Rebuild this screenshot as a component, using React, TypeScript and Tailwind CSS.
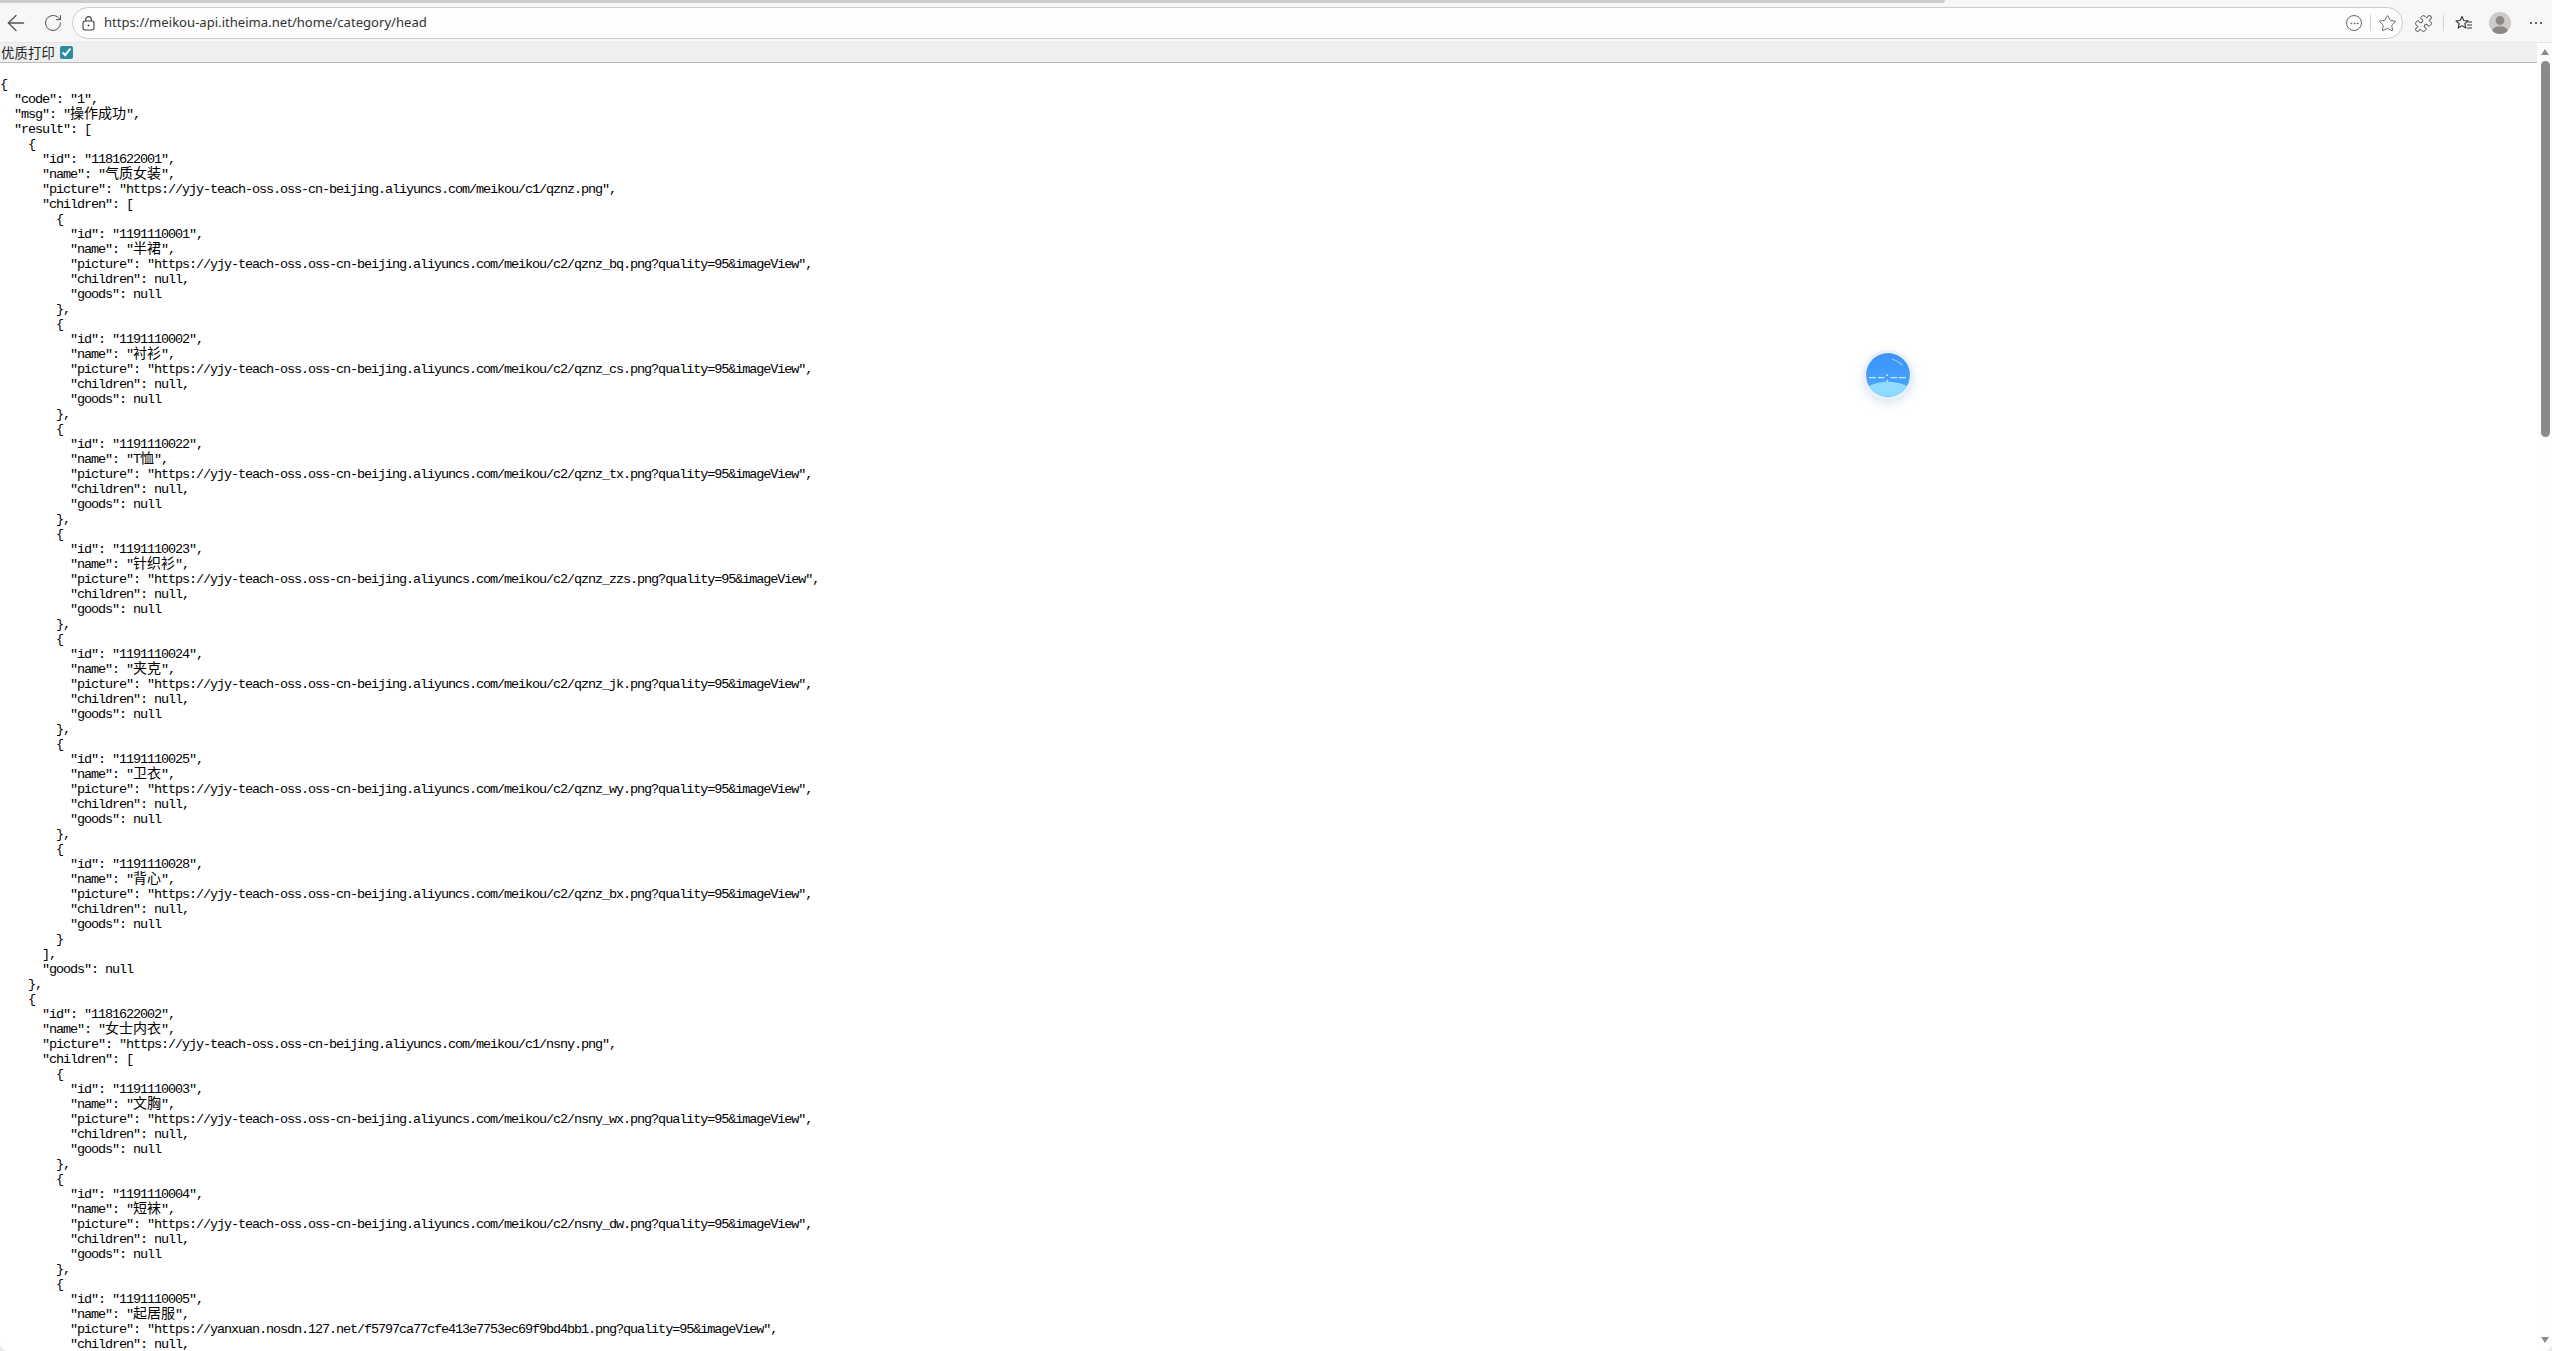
import { ArrowLeft, RotateCw, Star, Puzzle, Ellipsis } from "lucide-react";

const kids1 = [
  ["1191110001", "半裙", "https://yjy-teach-oss.oss-cn-beijing.aliyuncs.com/meikou/c2/qznz_bq.png?quality=95&imageView"],
  ["1191110002", "衬衫", "https://yjy-teach-oss.oss-cn-beijing.aliyuncs.com/meikou/c2/qznz_cs.png?quality=95&imageView"],
  ["1191110022", "T恤", "https://yjy-teach-oss.oss-cn-beijing.aliyuncs.com/meikou/c2/qznz_tx.png?quality=95&imageView"],
  ["1191110023", "针织衫", "https://yjy-teach-oss.oss-cn-beijing.aliyuncs.com/meikou/c2/qznz_zzs.png?quality=95&imageView"],
  ["1191110024", "夹克", "https://yjy-teach-oss.oss-cn-beijing.aliyuncs.com/meikou/c2/qznz_jk.png?quality=95&imageView"],
  ["1191110025", "卫衣", "https://yjy-teach-oss.oss-cn-beijing.aliyuncs.com/meikou/c2/qznz_wy.png?quality=95&imageView"],
  ["1191110028", "背心", "https://yjy-teach-oss.oss-cn-beijing.aliyuncs.com/meikou/c2/qznz_bx.png?quality=95&imageView"],
];

const kids2 = [
  ["1191110003", "文胸", "https://yjy-teach-oss.oss-cn-beijing.aliyuncs.com/meikou/c2/nsny_wx.png?quality=95&imageView"],
  ["1191110004", "短袜", "https://yjy-teach-oss.oss-cn-beijing.aliyuncs.com/meikou/c2/nsny_dw.png?quality=95&imageView"],
  ["1191110005", "起居服", "https://yanxuan.nosdn.127.net/f5797ca77cfe413e7753ec69f9bd4bb1.png?quality=95&imageView"],
];

function child(k: string[], last: boolean) {
  return [
    "        {",
    `          "id": "${k[0]}",`,
    `          "name": "${k[1]}",`,
    `          "picture": "${k[2]}",`,
    `          "children": null,`,
    `          "goods": null`,
    last ? "        }" : "        },",
  ];
}

// the screenshot stops at the "children" line of the third item
const lines = [
  "{",
  `  "code": "1",`,
  `  "msg": "操作成功",`,
  `  "result": [`,
  "    {",
  `      "id": "1181622001",`,
  `      "name": "气质女装",`,
  `      "picture": "https://yjy-teach-oss.oss-cn-beijing.aliyuncs.com/meikou/c1/qznz.png",`,
  `      "children": [`,
  ...kids1.flatMap((k, i) => child(k, i === kids1.length - 1)),
  "      ],",
  `      "goods": null`,
  "    },",
  "    {",
  `      "id": "1181622002",`,
  `      "name": "女士内衣",`,
  `      "picture": "https://yjy-teach-oss.oss-cn-beijing.aliyuncs.com/meikou/c1/nsny.png",`,
  `      "children": [`,
  ...kids2.flatMap((k) => child(k, false)),
].slice(0, 85);

function JsonLine({ text }: { text: string }) {
  const parts = text.split(/([\u4e00-\u9fff]+)/);
  return (
    <div className="h-[15px] leading-[15px] whitespace-pre">
      {parts.map((p, i) =>
        i % 2 === 1 ? (
          <span key={i} className="text-[14px] leading-[0] tracking-normal font-['Noto_Sans_CJK_SC',sans-serif]">
            {p}
          </span>
        ) : (
          <span key={i}>{p}</span>
        )
      )}
    </div>
  );
}

function Toolbar() {
  return (
    <div className="h-[43px] shrink-0 bg-[#f7f7f7] border-b border-[#e6e6e6]">
      <div className="h-[3px] w-[1945px] bg-[#cccccc] rounded-br-sm" />
      <div className="flex h-[39px] items-center pt-px pl-[3px] pr-[10px]">
        <ArrowLeft size={26} strokeWidth={1.2} className="text-[#555555]" />
        <RotateCw size={20} strokeWidth={1.2} className="ml-[14px] text-[#555555]" />
        <div className="ml-[9px] flex h-[32px] flex-1 items-center rounded-full border border-[#cccccc] bg-[#fdfdfd] pl-[9px] pr-[5px]">
          <svg width="13" height="15" viewBox="0 0 13 15" fill="none" stroke="#444" strokeWidth="1.1">
            <rect x="1" y="5" width="11" height="9" rx="2.2" />
            <path d="M3.7 5V3.4a2.8 2.8 0 0 1 5.6 0V5" />
            <circle cx="6.5" cy="9.5" r="0.9" fill="#444" stroke="none" />
          </svg>
          <span className="ml-[9px] text-[13.1px] text-[#333333] font-['Noto_Sans',sans-serif]">
            https://meikou-api.itheima.net/home/category/head
          </span>
          <div className="ml-auto flex items-center">
            <div className="flex h-[16px] w-[16px] items-center justify-center rounded-full border border-[#666666]">
              <Ellipsis size={11} strokeWidth={1.5} className="text-[#555555]" />
            </div>
            <div className="ml-[8px] mr-[7px] h-[16px] w-px bg-[#cfcfcf]" />
            <Star size={19} strokeWidth={1} className="text-[#444444]" />
          </div>
        </div>
        <Puzzle size={19} strokeWidth={1.1} className="ml-[11px] text-[#333333]" />
        <div className="ml-[10px] mr-[11px] h-[16px] w-px bg-[#d4d4d4]" />
        <svg width="18" height="17" viewBox="0 0 18 17" fill="none" stroke="#333" strokeWidth="1.1" strokeLinejoin="round">
          <path d="M7 1.5l1.8 4 4.2.4-3.2 2.8 1 4.3L7 10.6l-3.8 2.4 1-4.3L1 5.9l4.2-.4z" />
          <path d="M12.5 7h4.5M12 10h5M12 13h5" />
        </svg>
        <div className="ml-[16px] h-[22px] w-[22px] overflow-hidden rounded-full bg-[#cdcbc9]">
          <svg width="22" height="22" viewBox="0 0 22 22" fill="#8b8886">
            <circle cx="11" cy="8.5" r="4.4" />
            <ellipse cx="11" cy="18.5" rx="7.5" ry="4.2" />
          </svg>
        </div>
        <div className="ml-[19px] flex gap-[3px]">
          <span className="h-[2px] w-[2px] rounded-full bg-[#333333]" />
          <span className="h-[2px] w-[2px] rounded-full bg-[#333333]" />
          <span className="h-[2px] w-[2px] rounded-full bg-[#333333]" />
        </div>
      </div>
    </div>
  );
}

function Scrollbar() {
  return (
    <div className="flex w-[15px] shrink-0 flex-col items-center rounded-tl-md bg-[#fdfdfd] pl-[1px]">
      <div className="mt-[6px] h-0 w-0 border-x-[4.5px] border-b-[6px] border-x-transparent border-b-[#8a8a8a]" />
      <div className="mt-[6px] h-[376px] w-[9px] rounded-full bg-[#8a8a8a]" />
      <div className="mt-auto mb-[8px] h-0 w-0 border-x-[4.5px] border-t-[6px] border-x-transparent border-t-[#8a8a8a]" />
    </div>
  );
}

function FloatBall() {
  return (
    <div className="absolute left-[1863px] top-[350px] h-[50px] w-[50px] rounded-full border-[3px] border-[#e8f1fb] bg-white shadow-[0_4px_10px_rgba(120,150,190,0.25)]">
      <svg width="44" height="44" viewBox="0 0 43 43">
        <defs>
          <linearGradient id="ballSky" x1="0" y1="0" x2="0" y2="1">
            <stop offset="0" stopColor="#3b93fb" />
            <stop offset="1" stopColor="#4aa8ff" />
          </linearGradient>
        </defs>
        <circle cx="21.5" cy="21.5" r="21.5" fill="url(#ballSky)" />
        <path d="M3 32 Q21.5 24 40 32 A21.5 21.5 0 0 1 3 32z" fill="#8fdcff" />
        <path d="M3 24h6.6M11.7 24h6.3M24 24h6.7M32 24h7" stroke="#cfe6f7" strokeWidth="1.3" />
        <path d="M26 6 Q31 8 36 12" stroke="#d6e9ff" strokeWidth="1" fill="none" strokeDasharray="2 1" />
        <rect x="20" y="21" width="1.4" height="1.4" fill="#fff" />
        <rect x="20" y="26.5" width="1.4" height="1.4" fill="#fff" />
      </svg>
    </div>
  );
}

export default function App() {
  return (
    <div className="relative flex h-screen w-full flex-col overflow-hidden bg-[#e9e9e9]">
      <Toolbar />
      <div className="flex min-h-0 flex-1 overflow-hidden rounded-b-lg bg-white">
        <div className="min-w-0 flex-1 overflow-hidden">
          <div className="box-content flex h-[19px] items-center border-b border-[#bbbbbb] bg-[#efefef]">
            <span className="ml-px text-[13.3px] leading-[19px] tracking-[0.2px] text-[#222222] font-['Noto_Sans_CJK_SC',sans-serif]">优质打印</span>
            <input type="checkbox" defaultChecked className="ml-[5px] h-[13px] w-[13px] accent-[#2a8ba3]" />
          </div>
          <div className="mt-[14px] text-[13.5px] tracking-[-1.1px] text-black font-['Liberation_Mono',monospace]">
            {lines.map((l, i) => (
              <JsonLine key={i} text={l} />
            ))}
          </div>
        </div>
        <Scrollbar />
      </div>
      <FloatBall />
    </div>
  );
}
